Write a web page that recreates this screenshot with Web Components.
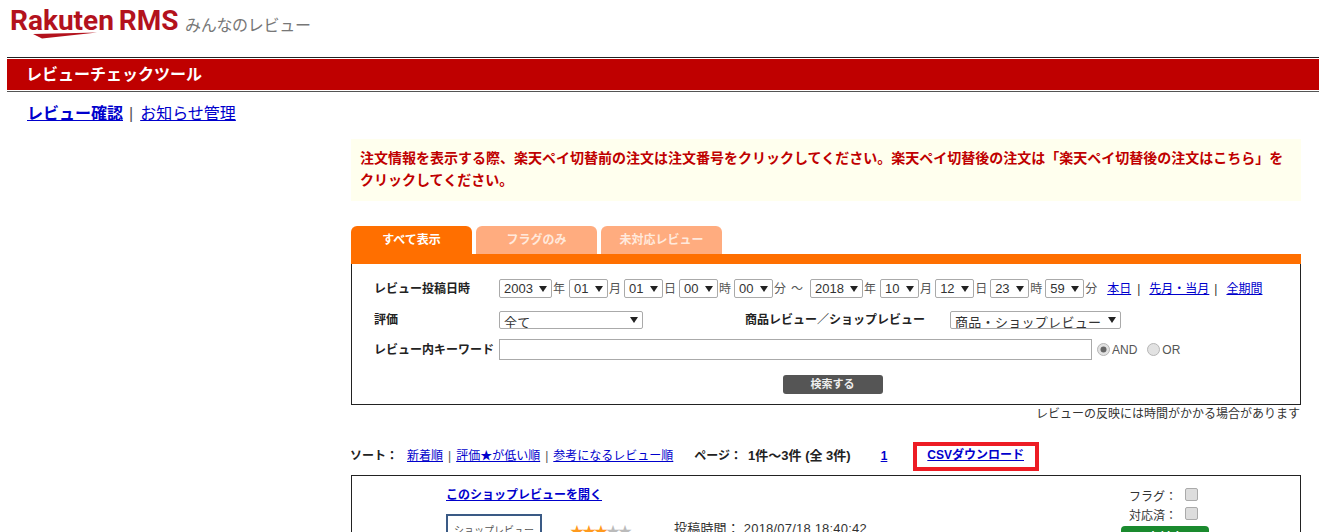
<!DOCTYPE html>
<html lang="ja">
<head>
<meta charset="utf-8">
<title>レビューチェックツール</title>
<style>
  html, body { margin: 0; padding: 0; height: 532px; overflow: hidden; background: #fff; }
  body { font-family: "Liberation Sans", "Noto Sans CJK JP", sans-serif; font-size: 12px; color: #111; }
</style>
</head>
<body>
<rms-header></rms-header>
<title-bar>レビューチェックツール</title-bar>
<nav-links></nav-links>
<main-column>
  <notice-box>注文情報を表示する際、楽天ペイ切替前の注文は注文番号をクリックしてください。楽天ペイ切替後の注文は「楽天ペイ切替後の注文はこちら」をクリックしてください。</notice-box>
  <search-panel></search-panel>
  <sort-bar></sort-bar>
  <review-card></review-card>
</main-column>

<script>
const FONT = '"Liberation Sans", "Noto Sans CJK JP", sans-serif';

class RmsHeader extends HTMLElement {
  constructor() {
    super();
    this.attachShadow({ mode: 'open' });
    this.shadowRoot.innerHTML = `
      <style>
        :host { display: block; height: 57px; box-sizing: border-box; padding: 6px 0 0 10px; }
        .row { display: flex; align-items: flex-start; }
        .logo { width: 169px; height: 36px; position: relative; }
        .word { font: 700 28px/30px Roboto, sans-serif; color: #b3121d; white-space: nowrap; word-spacing: -2px; }
        svg { position: absolute; left: 0; top: 25px; }
        .sub { font: 16px/20px "Noto Sans CJK JP", sans-serif; color: #777; margin: 8px 0 0 6px; letter-spacing: -.3px; }
      </style>
      <div class="row">
        <div class="logo">
          <div class="word">Rakuten RMS</div>
          <svg width="90" height="10" viewBox="0 0 90 10"><path d="M23 3 L87 1.5 L32 7.5 Z" fill="#b3121d"/></svg>
        </div>
        <div class="sub">みんなのレビュー</div>
      </div>`;
  }
}

class TitleBar extends HTMLElement {
  constructor() {
    super();
    this.attachShadow({ mode: 'open' });
    this.shadowRoot.innerHTML = `
      <style>
        :host { display: block; margin-left: 7px; border-top: 1px solid #222; border-bottom: 1px solid #555; padding: 1px 0; }
        div { background: #bf0000; color: #fff; height: 31px; box-sizing: border-box; padding-left: 19px;
              font: bold 16px/31px ${FONT}; }
      </style>
      <div><slot></slot></div>`;
  }
}

class NavLinks extends HTMLElement {
  constructor() {
    super();
    this.attachShadow({ mode: 'open' });
    this.shadowRoot.innerHTML = `
      <style>
        :host { display: block; padding: 11px 0 0 27px; height: 36px; box-sizing: border-box; font: 16px/22px ${FONT}; color: #555; }
        a { color: #00c; }
        a.on { font-weight: bold; }
        span { margin: 0 7px 0 6px; }
      </style>
      <a class="on" href="#">レビュー確認</a><span>|</span><a href="#">お知らせ管理</a>`;
  }
}

class MainColumn extends HTMLElement {
  constructor() {
    super();
    this.attachShadow({ mode: 'open' });
    this.shadowRoot.innerHTML = `
      <style>
        :host { display: block; margin: 11px 18px 0 351px; }
      </style>
      <slot></slot>`;
  }
}

class NoticeBox extends HTMLElement {
  constructor() {
    super();
    this.attachShadow({ mode: 'open' });
    this.shadowRoot.innerHTML = `
      <style>
        :host { display: block; background: #ffffee; color: #bf0000; height: 62px; box-sizing: border-box;
                padding: 8px 9px 0 9px; font: bold 14px/22px ${FONT}; }
      </style>
      <slot></slot>`;
  }
}

class FakeSelect extends HTMLElement {
  constructor() {
    super();
    this.attachShadow({ mode: 'open' });
    this.shadowRoot.innerHTML = `
      <style>
        :host { display: inline-flex; align-items: center; justify-content: space-between; box-sizing: border-box;
                height: 19px; border: 1px solid #aaa; border-radius: 2px; background: #fff; padding: 0 4px;
                font: 13px/17px ${FONT}; color: #333; vertical-align: middle; white-space: nowrap; overflow: hidden; }
        :host([low]) { height: 18px; }
        :host([low]) .t { transform: translateY(3px); letter-spacing: .3px; }
        .t { display: block; }
        svg { flex: none; margin-left: 3px; }
      </style>
      <span class="t"><slot></slot></span>
      <svg width="8" height="6" viewBox="0 0 8 6"><path d="M0 0H8L4 6Z" fill="#222"/></svg>`;
  }
}

class FakeRadio extends HTMLElement {
  constructor() {
    super();
    this.attachShadow({ mode: 'open' });
    const on = this.hasAttribute('checked');
    this.shadowRoot.innerHTML = `
      <style>
        :host { display: inline-block; width: 13px; height: 13px; }
        svg { display: block; }
      </style>
      <svg width="13" height="13" viewBox="0 0 13 13">
        <circle cx="6.5" cy="6.5" r="6" fill="#e2e2e2" stroke="#b5b5b5"/>
        ${on ? '<circle cx="6.5" cy="6.5" r="3" fill="#666"/>' : ''}
      </svg>`;
  }
}

class SearchPanel extends HTMLElement {
  constructor() {
    super();
    this.attachShadow({ mode: 'open' });
    const sel = (w, txt, low) => `<fake-select style="width:${w}px" ${low ? 'low' : ''}>${txt}</fake-select>`;
    const dateRun = (y, m, d, h, mi) =>
      `${sel(53, y)}<i class="y">年</i>${sel(39, m)}<i>月</i>${sel(39, d)}<i>日</i>${sel(39, h)}<i>時</i>${sel(39, mi)}<i>分</i>`;
    this.shadowRoot.innerHTML = `
      <style>
        :host { display: block; margin-top: 25px; font: 12px/18px ${FONT}; color: #333; }
        .tabs { display: flex; gap: 4px; height: 28px; }
        .tab { width: 121px; background: #ffac7f; color: #ffe9dc; border-radius: 6px 6px 0 0; text-align: center;
               font: bold 12px/28px ${FONT}; }
        .tab:first-child { background: #ff6f00; color: #fff; }
        .band { height: 10px; background: #ff6f00; }
        .box { border: 1px solid #222; border-top: 0; height: 141px; box-sizing: border-box; padding: 15px 0 0 22px; }
        .row { display: flex; align-items: center; height: 19px; white-space: nowrap; }
        .row + .row { margin-top: 12px; }
        .label { font-weight: bold; width: 125px; flex: none; color: #222; }
        i { font-style: normal; margin: 0 3px 0 1px; color: #555; }
        i.y { margin-right: 4px; }
        .wave { margin: 0 7px 0 2px; color: #555; }
        .links { margin-left: 7px; color: #333; }
        .links a { color: #00c; margin: 0 5px 0 0; }
        .links a:first-child { margin-right: 6px; }
        .links b { font-weight: normal; margin-right: 9px; }
        .label2 { font-weight: bold; color: #222; margin: 0 25px 0 102px; }
        .kw { width: 593px; height: 21px; box-sizing: border-box; border: 1px solid #aaa; background: #fff; flex: none; }
        .opt { color: #555; margin-left: 5px; display: flex; align-items: center; gap: 2px; }
        .go { text-align: center; margin-top: 16px; padding-right: 9px; }
        .go span { display: inline-block; width: 100px; height: 19px; background: #555; color: #eee; border-radius: 3px;
                   font: bold 11px/18px ${FONT}; }
        .hint { text-align: right; color: #333; line-height: 18px; padding-right: 1px; }
      </style>
      <div class="tabs">
        <div class="tab">すべて表示</div>
        <div class="tab">フラグのみ</div>
        <div class="tab">未対応レビュー</div>
      </div>
      <div class="band"></div>
      <div class="box">
        <div class="row">
          <div class="label">レビュー投稿日時</div>
          ${dateRun('2003', '01', '01', '00', '00')}
          <span class="wave">～</span>
          ${dateRun('2018', '10', '12', '23', '59')}
          <span class="links"><a href="#">本日</a><b>|</b><a href="#">先月・当月</a><b>|</b><a href="#">全期間</a></span>
        </div>
        <div class="row">
          <div class="label">評価</div>
          ${sel(144, '全て', true)}
          <div class="label2">商品レビュー／ショップレビュー</div>
          ${sel(171, '商品・ショップレビュー', true)}
        </div>
        <div class="row" style="margin-top:11px">
          <div class="label">レビュー内キーワード</div>
          <div class="kw"></div>
          <span class="opt"><fake-radio checked></fake-radio>AND</span>
          <span class="opt" style="margin-left:10px"><fake-radio></fake-radio>OR</span>
        </div>
        <div class="go"><span>検索する</span></div>
      </div>
      <div class="hint">レビューの反映には時間がかかる場合があります</div>`;
  }
}

class SortBar extends HTMLElement {
  constructor() {
    super();
    this.attachShadow({ mode: 'open' });
    this.shadowRoot.innerHTML = `
      <style>
        :host { display: flex; align-items: center; height: 27px; margin-top: 19px; margin-left: -1px;
                font: 12px/18px ${FONT}; color: #222; white-space: nowrap; }
        a { color: #00c; }
        .b { font-weight: bold; }
        .sep { color: #555; margin: 0 5px; }
        .count { font-weight: bold; font-size: 13px; margin-left: 6px; }
        .num { margin-left: 30px; width: 32px; }
        .csv { box-sizing: border-box; flex: none; align-self: flex-start; width: 126px; height: 29px; border: 4px solid #ed1c24;
               text-align: center; line-height: 19px; }
      </style>
      <span class="b" style="margin-right:9px">ソート：</span>
      <a href="#">新着順</a><span class="sep">|</span><a href="#">評価★が低い順</a><span class="sep">|</span><a href="#">参考になるレビュー順</a>
      <span class="b" style="margin-left:21px">ページ：</span><span class="count">1件～3件 (全 3件)</span>
      <a class="b num" href="#">1</a>
      <div class="csv"><a class="b" href="#">CSVダウンロード</a></div>`;
  }
}

class ReviewCard extends HTMLElement {
  constructor() {
    super();
    this.attachShadow({ mode: 'open' });
    this.shadowRoot.innerHTML = `
      <style>
        :host { display: flex; justify-content: space-between; margin-top: 6px; border: 1px solid #222; height: 120px;
                box-sizing: border-box; font: 12px/18px ${FONT}; color: #333; }
        .main { padding: 10px 0 0 94px; }
        .open { font-weight: bold; height: 28px; }
        .open a { color: #00c; }
        .info { display: flex; }
        .kind { box-sizing: border-box; width: 96px; height: 40px; border: 2px solid #3a5a85; font-size: 10px;
                line-height: 30px; text-align: center; color: #555; }
        .stars { width: 104px; margin-left: 28px; font-size: 14px; letter-spacing: -2px; color: #ff9a1e; padding-top: 8px; }
        .stars b { color: #bbb; font-weight: normal; }
        .time { padding-top: 6px; font-size: 13px; letter-spacing: .2px; }
        .side { width: 88px; margin-right: 91px; padding-top: 11px; }
        .flag { display: flex; align-items: center; height: 19px; padding-left: 8px; }
        .flag span { width: 56px; }
        input { appearance: none; box-sizing: border-box; width: 13px; height: 13px; margin: 0 0 4px 0; background: #ddd;
                border: 1px solid #aaa; border-radius: 2px; }
        .state { height: 24px; margin-top: 1px; background: #1a8a2e; border-radius: 4px 4px 0 0; color: #fff;
                 text-align: center; font-weight: bold; line-height: 24px; }
      </style>
      <div class="main">
        <div class="open"><a href="#">このショップレビューを開く</a></div>
        <div class="info">
          <div class="kind">ショップレビュー</div>
          <div class="stars">★★★<b>★★</b></div>
          <div class="time">投稿時間： 2018/07/18 18:40:42</div>
        </div>
      </div>
      <div class="side">
        <div class="flag"><span>フラグ：</span><input type="checkbox"></div>
        <div class="flag"><span>対応済：</span><input type="checkbox"></div>
        <div class="state">未対応</div>
      </div>`;
  }
}

customElements.define('rms-header', RmsHeader);
customElements.define('title-bar', TitleBar);
customElements.define('nav-links', NavLinks);
customElements.define('main-column', MainColumn);
customElements.define('notice-box', NoticeBox);
customElements.define('fake-select', FakeSelect);
customElements.define('fake-radio', FakeRadio);
customElements.define('search-panel', SearchPanel);
customElements.define('sort-bar', SortBar);
customElements.define('review-card', ReviewCard);
</script>
</body>
</html>
